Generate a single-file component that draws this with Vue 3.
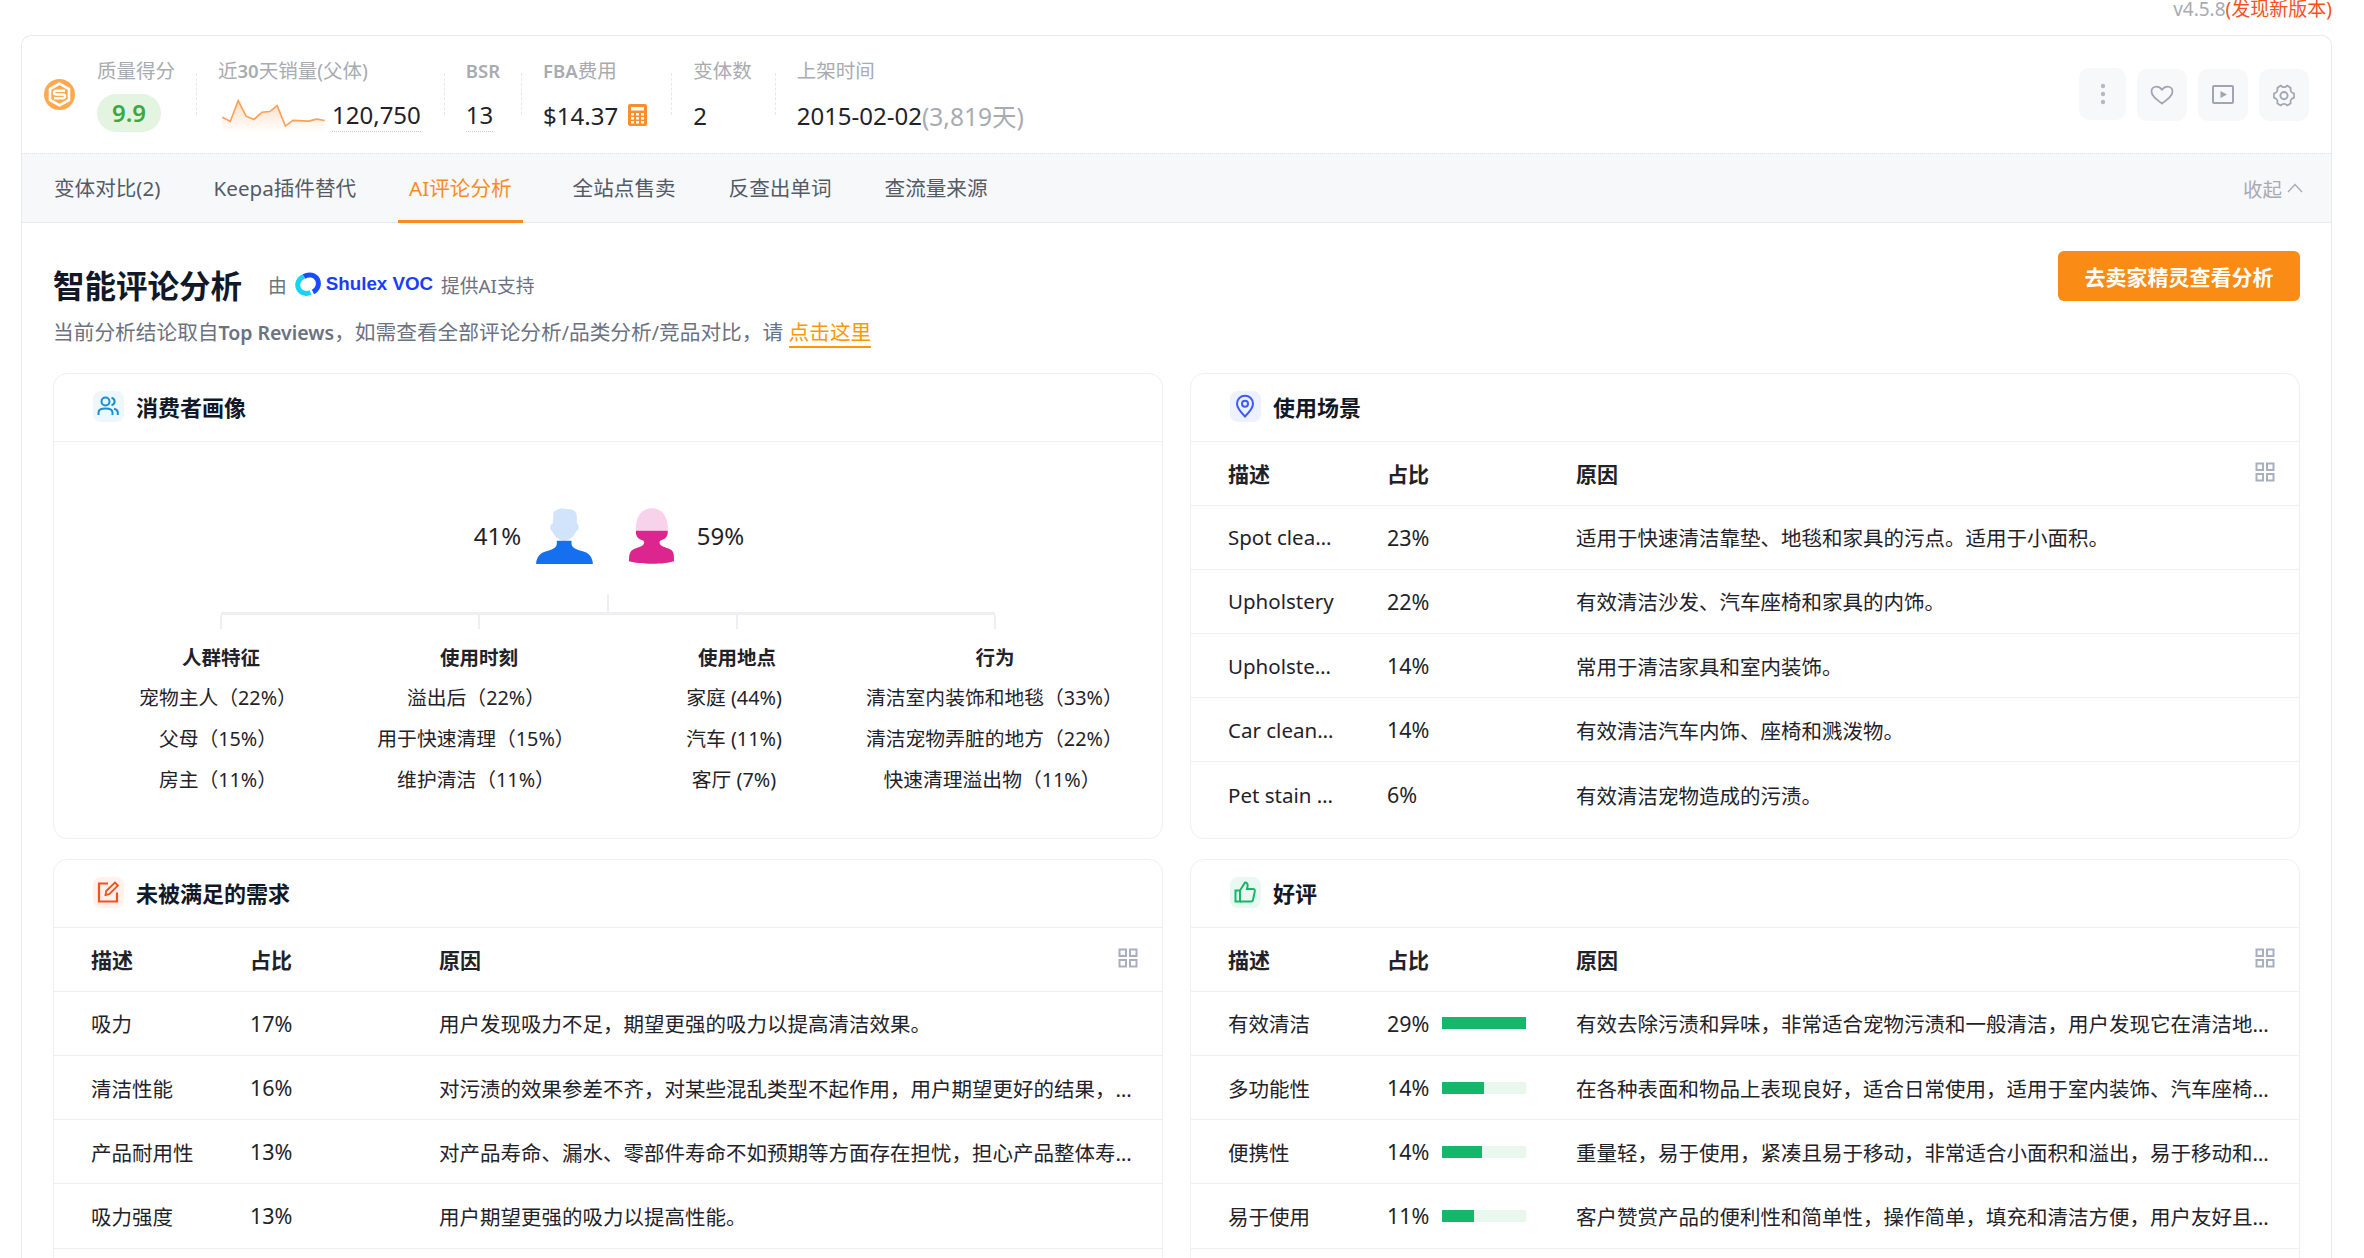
<template>
  <div class="page">
    <div class="version">v4.5.8<span class="version-new">(发现新版本)</span></div>

    <div class="panel">
      <!-- 顶部指标 -->
      <div class="stats">
        <svg class="brand" viewBox="0 0 31 31">
          <circle cx="15.5" cy="15.5" r="15.5" fill="#ffa94f" />
          <path d="M15.5 4.6 L25 10 V21 L15.5 26.4 L6 21 V10 Z" fill="none" stroke="#fff" stroke-width="2.6" stroke-linejoin="round" />
          <path d="M21 11.8 H12.2 Q10 11.8 10 13.7 Q10 15.5 12.2 15.5 H18.8 Q21 15.5 21 17.3 Q21 19.2 18.8 19.2 H10" fill="none" stroke="#fff" stroke-width="2.4" />
        </svg>
        <div class="stat">
          <div class="stat-label">质量得分</div>
          <div class="score">9.9</div>
        </div>
        <div class="sep"></div>
        <div class="stat">
          <div class="stat-label">近<span class="latin">30</span>天销量(父体)</div>
          <div class="stat-value">
            <svg class="spark" viewBox="0 0 310 100">
              <defs>
                <linearGradient id="sparkFill" x1="0" y1="0" x2="0" y2="1">
                  <stop offset="0" stop-color="#ffb27a" stop-opacity="0.45" />
                  <stop offset="1" stop-color="#ffb27a" stop-opacity="0" />
                </linearGradient>
              </defs>
              <path :d="sparkLine + ' L310 100 L0 100 Z'" fill="url(#sparkFill)" />
              <path :d="sparkLine" fill="none" stroke="#ff9f55" stroke-width="5" />
            </svg>
            <span class="dotted">120,750</span>
          </div>
        </div>
        <div class="sep sep-wide"></div>
        <div class="stat">
          <div class="stat-label"><span class="latin">BSR</span></div>
          <div class="stat-value"><span class="dotted">13</span></div>
        </div>
        <div class="sep"></div>
        <div class="stat">
          <div class="stat-label"><span class="latin">FBA</span>费用</div>
          <div class="stat-value">
            $14.37
            <svg class="calc" viewBox="0 0 19 22">
              <rect width="19" height="22" rx="2" fill="#f98e2c" />
              <rect x="3" y="3" width="13" height="3.5" fill="#fff" />
              <g fill="#fff">
                <rect v-for="dot in calcDots" :key="dot.x + '-' + dot.y" :x="dot.x" :y="dot.y" width="3" height="2.5" />
              </g>
            </svg>
          </div>
        </div>
        <div class="sep sep-calc"></div>
        <div class="stat">
          <div class="stat-label">变体数</div>
          <div class="stat-value">2</div>
        </div>
        <div class="sep sep-wide"></div>
        <div class="stat">
          <div class="stat-label">上架时间</div>
          <div class="stat-value">2015-02-02<span class="muted">(3,819天)</span></div>
        </div>

        <div class="actions">
          <button class="action action-more">
            <svg width="6" height="24" viewBox="0 0 6 24" fill="#b5b9c4">
              <circle cx="3" cy="4" r="2.2" /><circle cx="3" cy="12" r="2.2" /><circle cx="3" cy="20" r="2.2" />
            </svg>
          </button>
          <button class="action">
            <svg width="24" height="24" viewBox="0 0 24 24" fill="none" stroke="#a0a5b5" stroke-width="1.8">
              <path d="M12 20.5 C6 16 1.5 12.6 1.5 8.4 C1.5 5.4 3.8 3.6 6.4 3.6 C8.6 3.6 10.6 4.7 12 6.6 C13.4 4.7 15.4 3.6 17.6 3.6 C20.2 3.6 22.5 5.4 22.5 8.4 C22.5 12.6 18 16 12 20.5 Z" />
            </svg>
          </button>
          <button class="action">
            <svg width="24" height="24" viewBox="0 0 24 24" fill="none" stroke="#a0a5b5" stroke-width="2">
              <rect x="2" y="3" width="20" height="17" rx="1" />
              <path d="M9.5 8 L16 11.5 L9.5 15 Z" fill="#a0a5b5" stroke="none" />
            </svg>
          </button>
          <button class="action">
            <svg width="24" height="24" viewBox="0 0 24 24" fill="none" stroke="#a0a5b5" stroke-width="1.9">
              <path d="M8.5 1.8 C9.5 3 10.7 3.5 12 3.5 C13.3 3.5 14.5 3 15.5 1.8 C17 2.4 18.4 3.3 19.5 4.6 C19 6.1 19.2 7.4 19.9 8.5 C20.6 9.6 21.6 10.2 23 10.4 C23.3 12.2 23.3 13.8 23 15.4 C21.6 15.7 20.6 16.3 19.9 17.4 C19.2 18.5 19 19.8 19.5 21.3 C18.4 22.5 17 23.4 15.5 23.8 C14.5 22.7 13.3 22.1 12 22.1 C10.7 22.1 9.5 22.7 8.5 23.8 C7 23.4 5.6 22.5 4.5 21.3 C5 19.8 4.8 18.5 4.1 17.4 C3.4 16.3 2.4 15.7 1 15.4 C.7 13.8 .7 12.2 1 10.4 C2.4 10.2 3.4 9.6 4.1 8.5 C4.8 7.4 5 6.1 4.5 4.6 C5.6 3.3 7 2.4 8.5 1.8 Z" transform="translate(1.2 1) scale(.9)" />
              <circle cx="12" cy="12.6" r="3.6" />
            </svg>
          </button>
        </div>
      </div>

      <!-- 标签页 -->
      <div class="tabs">
        <div
          v-for="tab in tabs"
          :key="tab"
          class="tab"
          :class="{ 'tab--active': tab === activeTab }"
        >{{ tab }}</div>
        <div class="collapse">
          收起
          <svg width="16" height="10" viewBox="0 0 16 10" fill="none" stroke="#a8abb2" stroke-width="1.4">
            <path d="M1 9 L8 1.5 L15 9" />
          </svg>
        </div>
      </div>

      <div class="content">
        <div class="head">
          <div>
            <div class="title-row">
              <h1>智能评论分析</h1>
              <span class="by">由</span>
              <svg class="voc-logo" viewBox="0 0 26 24" fill="none" stroke-width="5">
                <path d="M9 4.5 C3.5 6.5 1.5 12 3.5 16.5 C5.5 21 11 22.5 15.5 20.5" stroke="#19d3f3" />
                <path d="M9 4.5 C14 1.5 20 3 22.5 7.5 C24.5 12 23 17.5 18 20" stroke="#1a4cff" />
              </svg>
              <span class="voc-name">Shulex VOC</span>
              <span class="by">提供AI支持</span>
            </div>
            <p class="sub">当前分析结论取自<span class="sub-latin">Top Reviews</span>，如需查看全部评论分析<span class="slash">/</span>品类分析<span class="slash">/</span>竞品对比，请 <a class="link">点击这里</a></p>
          </div>
          <button class="go-btn">去卖家精灵查看分析</button>
        </div>

        <div class="cards">
          <!-- 消费者画像 -->
          <section class="card">
            <div class="card-head">
              <span class="card-icon card-icon--blue">
                <svg width="24" height="24" viewBox="0 0 24 24" fill="none" stroke="#1a8fd1" stroke-width="2">
                  <circle cx="9.5" cy="7.5" r="4" />
                  <path d="M2.5 21 V18.5 C2.5 15.8 5 14.5 9.5 14.5 C14 14.5 16.5 15.8 16.5 18.5 V21" />
                  <path d="M15.5 3.8 C17.5 4.4 18.6 5.8 18.6 7.5 C18.6 9.2 17.5 10.6 15.5 11.2" />
                  <path d="M18 14.8 C20.5 15.4 21.8 16.6 21.8 18.5 V21" />
                </svg>
              </span>
              <h2>消费者画像</h2>
            </div>
            <div class="gender">
              <span>41%</span>
              <svg class="male" viewBox="0 0 170 168">
                <path d="M52 12 C60 4 78 -2 92 4 C106 2 122 8 122 26 L122 46 C130 50 130 66 120 70 C114 84 104 96 84 98 C64 96 54 84 48 70 C40 66 40 50 50 46 Z" fill="#d2e3fc" />
                <path d="M62 98 H106 V108 C108 124 130 126 146 132 C162 138 170 152 170 168 H0 C0 152 8 138 24 132 C40 126 60 124 62 108 Z" fill="#1570ef" />
              </svg>
              <svg class="female" viewBox="0 0 136 168">
                <path d="M21 68 C18 30 36 0 69 0 C102 0 120 30 117 68 Z" fill="#f8d2ea" />
                <path d="M21 68 H117 C118 84 112 94 94 98 L92 104 C94 118 112 118 124 124 C136 130 136 140 136 160 C110 170 30 170 0 160 C0 140 2 130 14 124 C26 118 44 118 46 104 L44 98 C26 94 20 84 21 68 Z" fill="#dd2590" />
              </svg>
              <span>59%</span>
            </div>
            <div class="tree">
              <div class="tree-stem"></div>
              <div class="tree-bar"></div>
            </div>
            <div class="persona">
              <div v-for="col in persona" :key="col.title" class="persona-col">
                <div class="persona-tick"></div>
                <h3>{{ col.title }}</h3>
                <div v-for="item in col.items" :key="item" class="persona-item">{{ item }}</div>
              </div>
            </div>
          </section>

          <!-- 表格卡片 -->
          <section v-for="card in tableCards" :key="card.title" class="card" :class="{ 'card--cut': card.cut }">
            <div class="card-head">
              <span class="card-icon" :class="'card-icon--' + card.tone">
                <svg v-if="card.tone === 'indigo'" width="24" height="24" viewBox="0 0 24 24" fill="none" stroke="#3d5afe" stroke-width="2">
                  <path d="M12 22.5 C7 17.5 4 13.5 4 9.8 C4 5 7.6 1.8 12 1.8 C16.4 1.8 20 5 20 9.8 C20 13.5 17 17.5 12 22.5 Z" />
                  <circle cx="12" cy="9.8" r="3" />
                </svg>
                <svg v-else-if="card.tone === 'orange'" width="24" height="24" viewBox="0 0 24 24" fill="none" stroke="#f4511e" stroke-width="2.2">
                  <path d="M12 3.5 H3 V21.5 H21 V12.5" />
                  <path d="M9.5 15 L10.2 11 L19 2.5 L22 5.5 L13.2 14.2 Z" stroke-width="1.8" />
                </svg>
                <svg v-else width="24" height="24" viewBox="0 0 24 24" fill="none" stroke="#12b76a" stroke-width="2">
                  <path d="M2.5 10.5 H7 V21.5 H2.5 Z" />
                  <path d="M7 10.5 L12 2.5 C14 2.5 15 4 14.6 6 L14 9 H20 C21.5 9 22 10.2 21.8 11.4 L20 20 C19.8 21 19 21.5 18 21.5 H7" />
                </svg>
              </span>
              <h2>{{ card.title }}</h2>
            </div>
            <div class="row row--head">
              <div>描述</div>
              <div>占比</div>
              <div class="row-reason">
                原因
                <svg class="grid-icon" width="20" height="20" viewBox="0 0 20 20" fill="none" stroke="#a8afc0" stroke-width="2">
                  <rect x="1.5" y="1.5" width="6.5" height="6.5" /><rect x="12" y="1.5" width="6.5" height="6.5" />
                  <rect x="1.5" y="12" width="6.5" height="6.5" /><rect x="12" y="12" width="6.5" height="6.5" />
                </svg>
              </div>
            </div>
            <div v-for="row in card.rows" :key="row.name" class="row">
              <div class="row-name">{{ row.name }}</div>
              <div class="row-pct">
                <span>{{ row.pct }}</span>
                <div v-if="row.bar" class="bar"><div class="bar-fill" :style="{ width: row.bar + '%' }"></div></div>
              </div>
              <div class="row-text">{{ row.text }}</div>
            </div>
          </section>
        </div>
      </div>
    </div>
  </div>
</template>

<script setup>
const activeTab = 'AI评论分析'
const tabs = ['变体对比(2)', 'Keepa插件替代', 'AI评论分析', '全站点售卖', '反查出单词', '查流量来源']

const sparkLine = 'M0 55 L24 68 L48 5 L72 52 L96 62 L120 40 L144 38 L166 20 L191 82 L214 65 L262 67 L286 61 L310 65'

const calcDots = []
for (const y of [9, 13, 17]) {
  for (const x of [3, 8, 13]) calcDots.push({ x, y })
}

const persona = [
  { title: '人群特征', items: ['宠物主人（22%）', '父母（15%）', '房主（11%）'] },
  { title: '使用时刻', items: ['溢出后（22%）', '用于快速清理（15%）', '维护清洁（11%）'] },
  { title: '使用地点', items: ['家庭 (44%)', '汽车 (11%)', '客厅 (7%)'] },
  { title: '行为', items: ['清洁室内装饰和地毯（33%）', '清洁宠物弄脏的地方（22%）', '快速清理溢出物（11%）'] }
]

const tableCards = [
  {
    title: '使用场景',
    tone: 'indigo',
    rows: [
      { name: 'Spot cleaning', pct: '23%', text: '适用于快速清洁靠垫、地毯和家具的污点。适用于小面积。' },
      { name: 'Upholstery', pct: '22%', text: '有效清洁沙发、汽车座椅和家具的内饰。' },
      { name: 'Upholstery care', pct: '14%', text: '常用于清洁家具和室内装饰。' },
      { name: 'Car cleaning', pct: '14%', text: '有效清洁汽车内饰、座椅和溅泼物。' },
      { name: 'Pet stain removal', pct: '6%', text: '有效清洁宠物造成的污渍。' }
    ]
  },
  {
    title: '未被满足的需求',
    tone: 'orange',
    cut: true,
    rows: [
      { name: '吸力', pct: '17%', text: '用户发现吸力不足，期望更强的吸力以提高清洁效果。' },
      { name: '清洁性能', pct: '16%', text: '对污渍的效果参差不齐，对某些混乱类型不起作用，用户期望更好的结果，希望清洁能力得到改进。' },
      { name: '产品耐用性', pct: '13%', text: '对产品寿命、漏水、零部件寿命不如预期等方面存在担忧，担心产品整体寿命较短。' },
      { name: '吸力强度', pct: '13%', text: '用户期望更强的吸力以提高性能。' }
    ]
  },
  {
    title: '好评',
    tone: 'green',
    cut: true,
    rows: [
      { name: '有效清洁', pct: '29%', bar: 100, text: '有效去除污渍和异味，非常适合宠物污渍和一般清洁，用户发现它在清洁地毯方面非常出色。' },
      { name: '多功能性', pct: '14%', bar: 50, text: '在各种表面和物品上表现良好，适合日常使用，适用于室内装饰、汽车座椅和地毯等。' },
      { name: '便携性', pct: '14%', bar: 48, text: '重量轻，易于使用，紧凑且易于移动，非常适合小面积和溢出，易于移动和存放，携带方便。' },
      { name: '易于使用', pct: '11%', bar: 38, text: '客户赞赏产品的便利性和简单性，操作简单，填充和清洁方便，用户友好且易于上手。' }
    ]
  }
]
</script>

<style>
html,
body {
  margin: 0;
  background: #fff;
  overflow: hidden;
}
</style>

<style scoped>
.page {
  height: 1258px;
  overflow: hidden;
  font-family: "Noto Sans", "Noto Sans CJK SC", sans-serif;
  font-size: 20.5px;
  color: #1f2329;
  background: #fff;
}

.version {
  height: 35px;
  padding-right: 32px;
  text-align: right;
  font-size: 19px;
  line-height: 18px;
  color: #a8abb2;
}

.version-new {
  color: #f4511e;
}

.panel {
  margin: 0 32px 0 21px;
  border: 1px solid #e8eaee;
  border-bottom: 0;
  border-radius: 10px 10px 0 0;
}

/* 顶部指标 */
.stats {
  display: flex;
  align-items: flex-start;
  gap: 21px;
  height: 117px;
  box-sizing: border-box;
  padding: 21px 22px 0 22px;
}

.brand {
  width: 31px;
  height: 31px;
  margin-top: 22px;
  margin-right: 1px;
}

.stat-label {
  font-size: 19.5px;
  line-height: 28px;
  color: #a8abb2;
  white-space: nowrap;
}

.latin {
  font-size: 18.5px;
  font-weight: 600;
}

.score {
  width: 64px;
  height: 38px;
  margin-top: 9px;
  border-radius: 19px;
  background: #e3f4e1;
  color: #3ca83f;
  font-size: 24px;
  font-weight: 600;
  line-height: 38px;
  text-align: center;
}

.stat-value {
  display: flex;
  align-items: center;
  height: 40px;
  margin-top: 10px;
  font-size: 24px;
  white-space: nowrap;
}

.dotted {
  line-height: 32px;
  margin-top: 1px;
  border-bottom: 1px dotted #c9ccd2;
}

.muted {
  font-size: 24.5px;
  color: #a8abb2;
}

.spark {
  width: 103px;
  height: 33px;
  margin: 0 7px 0 4px;
}

.calc {
  width: 19px;
  height: 22px;
  margin-left: 10px;
}

.sep {
  flex: none;
  height: 42px;
  margin-top: 16px;
  border-left: 1px dashed #e6e8eb;
}

.sep-wide {
  margin-left: 2px;
}

.sep-calc {
  margin-left: 3px;
}

.actions {
  display: flex;
  align-items: center;
  gap: 11px;
  margin-left: auto;
  margin-top: 12px;
}

.action {
  display: flex;
  align-items: center;
  justify-content: center;
  width: 50px;
  height: 52px;
  padding: 0;
  border: 0;
  border-radius: 10px;
  background: #f7f8fa;
}

.action-more {
  width: 47px;
  margin-top: -3px;
}

/* 标签页 */
.tabs {
  display: flex;
  align-items: stretch;
  height: 70px;
  box-sizing: border-box;
  padding-left: 21px;
  background: #f7f8fa;
  border-top: 1px dotted #e0e2e6;
  border-bottom: 1px solid #e8eaee;
}

.tab {
  position: relative;
  padding: 0 11px;
  margin-right: 31px;
  font-size: 20.6px;
  line-height: 68px;
  color: #555b66;
  white-space: nowrap;
}

.tab--active {
  margin-right: 39px;
  color: #fa8c1f;
}

.tab--active::after {
  content: "";
  position: absolute;
  left: 0;
  right: 0;
  bottom: -1px;
  height: 3px;
  background: #fa8c1f;
}

.collapse {
  display: flex;
  align-items: center;
  gap: 5px;
  margin-left: auto;
  padding-right: 28px;
  font-size: 19.5px;
  color: #a8abb2;
}

/* 内容 */
.content {
  padding: 40px 31px 0 31px;
}

.head {
  display: flex;
  justify-content: space-between;
  align-items: flex-start;
  margin-bottom: 24.5px;
}

.title-row {
  display: flex;
  align-items: center;
  height: 42px;
}

h1 {
  margin: 0 26px 0 0;
  font-size: 31.5px;
  font-weight: 700;
  color: #111827;
}

.by {
  font-size: 18.75px;
  color: #6b7280;
}

.voc-logo {
  width: 26px;
  height: 24px;
  margin: 0 5px 0 8px;
}

.voc-name {
  margin-right: 8px;
  font-family: "Liberation Sans", "Noto Sans", sans-serif;
  font-size: 18.75px;
  font-weight: 700;
  color: #1a3cff;
}

.sub {
  margin: 12px 0 0;
  font-size: 20.7px;
  line-height: 30px;
  color: #6b7280;
}

.sub-latin {
  font-size: 19.5px;
  font-weight: 600;
}

.slash {
  font-size: 19.5px;
}

.link {
  color: #ff9800;
  border-bottom: 2px solid #ff9800;
}

.go-btn {
  width: 242px;
  height: 50px;
  margin-top: -12px;
  border: 0;
  border-radius: 6px;
  background: #fa8c16;
  color: #fff;
  font-family: inherit;
  font-size: 21px;
  font-weight: 700;
}

.cards {
  display: grid;
  grid-template-columns: 1fr 1fr;
  gap: 20px 27px;
}

.card {
  border: 1px solid #eef0f3;
  border-radius: 14px;
  padding-bottom: 11px;
  min-width: 0;
}

.card--cut {
  padding-bottom: 60px;
}

.card-head {
  display: flex;
  align-items: center;
  gap: 12.5px;
  height: 68px;
  box-sizing: border-box;
  padding: 0 0 2px 38.5px;
  border-bottom: 1px solid #eef0f3;
}

h2 {
  margin: 0;
  font-size: 22px;
  font-weight: 700;
  color: #111827;
}

.card-icon {
  display: flex;
  align-items: center;
  justify-content: center;
  width: 31px;
  height: 31px;
  border-radius: 8px;
}

.card-icon--blue {
  background: #eef7fd;
}

.card-icon--indigo {
  background: #eef1ff;
}

.card-icon--orange {
  background: #fff1eb;
}

.card-icon--green {
  background: #e9f9f1;
}

/* 画像 */
.gender {
  display: flex;
  align-items: center;
  justify-content: center;
  height: 56px;
  margin-top: 66px;
  font-size: 24px;
  transform: translateX(1px);
}

.male {
  width: 57px;
  height: 56px;
  margin: 0 36px 0 14.5px;
}

.female {
  width: 45px;
  height: 56px;
  margin-right: 23px;
}

.tree {
  margin-top: 30px;
}

.tree-stem {
  width: 2px;
  height: 18px;
  margin: 0 auto;
  background: #eeeef4;
}

.tree-bar {
  height: 3px;
  margin: 0 167px;
  background: #eeeef4;
}

.persona {
  display: grid;
  grid-template-columns: repeat(4, 258px);
  justify-content: center;
}

.persona-col {
  text-align: center;
  white-space: nowrap;
}

.persona-tick {
  width: 2px;
  height: 14px;
  margin: 0 auto 14.5px;
  background: #eeeef4;
}

h3 {
  margin: 0 0 -1.5px;
  font-size: 19.5px;
  font-weight: 700;
  line-height: 30px;
}

.persona-item {
  margin-top: 11px;
  padding-right: 6px;
  font-size: 19.8px;
  line-height: 30px;
}

/* 表格 */
.row {
  display: grid;
  grid-template-columns: 109px 139px minmax(0, 1fr);
  column-gap: 50px;
  align-items: center;
  height: 64.2px;
  box-sizing: border-box;
  padding: 0 26px 0 37px;
  border-bottom: 1px solid #eef0f3;
}

.row:last-child {
  border-bottom: 0;
}

.card--cut .row:last-child {
  border-bottom: 1px solid #eef0f3;
}

.row--head {
  font-size: 21px;
  font-weight: 700;
}

.row-reason {
  display: flex;
  justify-content: space-between;
  align-items: center;
}

.grid-icon {
  margin: -2px -1.5px 0 0;
}

.row-name,
.row-text {
  overflow: hidden;
  white-space: nowrap;
  text-overflow: ellipsis;
}

.row-pct {
  display: flex;
  align-items: center;
}

.row-pct span {
  width: 55px;
  flex: none;
  font-size: 21.5px;
}

.bar {
  flex: 1;
  height: 12px;
  background: #e8f8ef;
}

.bar-fill {
  height: 100%;
  background: #14b86a;
}
</style>
